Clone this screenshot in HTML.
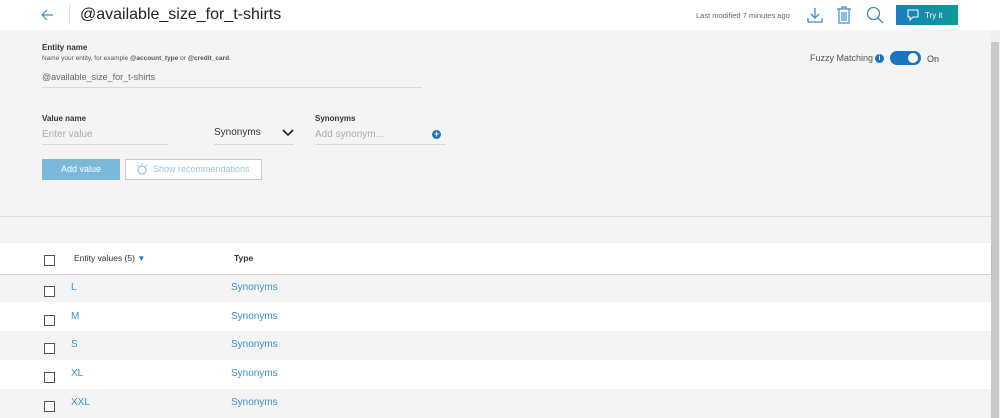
<!DOCTYPE html>
<html><head><style>
*{margin:0;padding:0;box-sizing:border-box}
body{width:1000px;height:418px;overflow:hidden;background:#f4f4f4;font-family:"Liberation Sans",sans-serif;position:relative;color:#333}
.a{position:absolute}
.hdr{left:0;top:0;width:1000px;height:30px;background:#fff}
.lbl{font-size:8px;font-weight:bold;color:#333}
.ph{font-size:10px;color:#aaa}
.ln{height:1px;background:#d8d8d8}
.row{left:0;width:991px;height:29px}
.cb{left:44px;width:11px;height:11px;border:1.5px solid #555;background:#fff}
.v{left:71px;font-size:10px;color:#3a8fc8}
.t{left:231px;font-size:10px;color:#3a8fc8}
</style></head><body>
<div class="a hdr"></div>
<svg class="a" style="left:40px;top:8px" width="14" height="14" viewBox="0 0 14 14"><path d="M13 7H2M7 2L2 7l5 5" fill="none" stroke="#3a8fc8" stroke-width="1.2"/></svg>
<div class="a" style="left:69px;top:5px;width:1px;height:20px;background:#ddd"></div>
<div class="a" style="left:80px;top:6px;font-size:16px;color:#222">@available_size_for_t-shirts</div>
<div class="a" style="left:696px;top:11px;font-size:7.5px;color:#666">Last modified 7 minutes ago</div>
<svg class="a" style="left:806px;top:6px" width="18" height="18" viewBox="0 0 18 18"><path d="M9 2v10M5 8l4 4 4-4M2 12v4h14v-4" fill="none" stroke="#3a8fc8" stroke-width="1.3"/></svg>
<svg class="a" style="left:836px;top:6px" width="16" height="18" viewBox="0 0 16 18"><path d="M1 3h14M6 3V1h4v2M3 3v14h10V3M6 6v9M8 6v9M10 6v9" fill="none" stroke="#3a8fc8" stroke-width="1.2"/></svg>
<svg class="a" style="left:866px;top:6px" width="18" height="18" viewBox="0 0 18 18"><circle cx="7.5" cy="7.5" r="6" fill="none" stroke="#3a8fc8" stroke-width="1.3"/><path d="M12 12l5 5" stroke="#3a8fc8" stroke-width="1.3"/></svg>
<div class="a" style="left:896px;top:5px;width:62px;height:20px;background:linear-gradient(90deg,#1a7fbf,#0e9b94)"></div>
<svg class="a" style="left:907px;top:9px" width="12" height="12" viewBox="0 0 12 12"><path d="M1 1h10v7H6l-3 3V8H1z" fill="none" stroke="#fff" stroke-width="1"/></svg>
<div class="a" style="left:925px;top:11px;font-size:8px;color:#fff">Try it</div>
<div class="a" style="left:991px;top:30px;width:9px;height:388px;background:#f0f0f0"></div>
<div class="a" style="left:991px;top:42px;width:8px;height:376px;background:#c8c8c8"></div>

<div class="a lbl" style="left:42px;top:43px">Entity name</div>
<div class="a" style="left:42px;top:55px;font-size:6.5px;color:#555">Name your entity, for example <b>@account_type</b> or <b>@credit_card</b>.</div>
<div class="a" style="left:42px;top:72px;font-size:9px;color:#666">@available_size_for_t-shirts</div>
<div class="a ln" style="left:42px;top:87px;width:380px"></div>
<div class="a" style="left:810px;top:53px;font-size:9px;color:#555">Fuzzy Matching</div>
<div class="a" style="left:875px;top:54px;width:9px;height:9px;border-radius:50%;background:#1a74c0;color:#fff;font-size:7px;text-align:center;line-height:9px;font-weight:bold">i</div>
<div class="a" style="left:890px;top:51px;width:31px;height:14px;border-radius:7px;background:#1a74c0"></div>
<div class="a" style="left:908px;top:53px;width:10px;height:10px;border-radius:50%;background:#fff"></div>
<div class="a" style="left:927px;top:54px;font-size:9px;color:#444">On</div>

<div class="a lbl" style="left:42px;top:114px">Value name</div>
<div class="a ph" style="left:42px;top:129px">Enter value</div>
<div class="a ln" style="left:42px;top:144px;width:126px"></div>
<div class="a" style="left:214px;top:127px;font-size:10px;color:#333">Synonyms</div>
<svg class="a" style="left:282px;top:129px" width="12" height="8" viewBox="0 0 12 8"><path d="M1 1l5 5 5-5" fill="none" stroke="#222" stroke-width="1.6"/></svg>
<div class="a ln" style="left:214px;top:144px;width:80px"></div>
<div class="a lbl" style="left:315px;top:114px">Synonyms</div>
<div class="a ph" style="left:315px;top:129px">Add synonym...</div>
<div class="a" style="left:432px;top:130px;width:9px;height:9px;border-radius:50%;background:#1a74c0;color:#fff;font-size:9px;line-height:9px;text-align:center;font-weight:bold">+</div>
<div class="a ln" style="left:315px;top:144px;width:131px"></div>
<div class="a" style="left:42px;top:159px;width:78px;height:21px;background:#7ab8dc;color:#fff;font-size:9px;text-align:center;line-height:21px">Add value</div>
<div class="a" style="left:125px;top:159px;width:137px;height:21px;border:1px solid #bcd;background:#fff;color:#9cc4de;font-size:9px;line-height:19px;padding-left:27px">Show recommendations</div>
<svg class="a" style="left:135px;top:162px" width="14" height="14" viewBox="0 0 14 14"><circle cx="7" cy="8" r="4" fill="none" stroke="#9cc4de" stroke-width="1.2"/><path d="M7 1v2M2 3l1.5 1.5M12 3l-1.5 1.5" stroke="#9cc4de"/></svg>

<div class="a" style="left:0;top:216px;width:991px;height:1px;background:#ddd"></div>
<div class="a row" style="top:243px;height:31px;background:#fff;box-shadow:0 1px 2px rgba(0,0,0,.2)"></div>
<div class="a cb" style="top:255px"></div>
<div class="a" style="left:74px;top:253px;font-size:8.5px;color:#333">Entity values (5) <span style="color:#1a74c0;font-size:8px">▼</span></div>
<div class="a" style="left:234px;top:253px;font-size:8.5px;color:#333;font-weight:bold">Type</div>

<div class="a row" style="top:275px;background:#f4f4f4"></div>
<div class="a row" style="top:302px;background:#fff"></div>
<div class="a row" style="top:331px;background:#f4f4f4"></div>
<div class="a row" style="top:360px;background:#fff"></div>
<div class="a row" style="top:389px;background:#f4f4f4"></div>

<div class="a cb" style="top:286px"></div><div class="a v" style="top:282px">L</div><div class="a t" style="top:282px">Synonyms</div>
<div class="a cb" style="top:315px"></div><div class="a v" style="top:311px">M</div><div class="a t" style="top:311px">Synonyms</div>
<div class="a cb" style="top:343px"></div><div class="a v" style="top:339px">S</div><div class="a t" style="top:339px">Synonyms</div>
<div class="a cb" style="top:372px"></div><div class="a v" style="top:368px">XL</div><div class="a t" style="top:368px">Synonyms</div>
<div class="a cb" style="top:401px"></div><div class="a v" style="top:397px">XXL</div><div class="a t" style="top:397px">Synonyms</div>
</body></html>
